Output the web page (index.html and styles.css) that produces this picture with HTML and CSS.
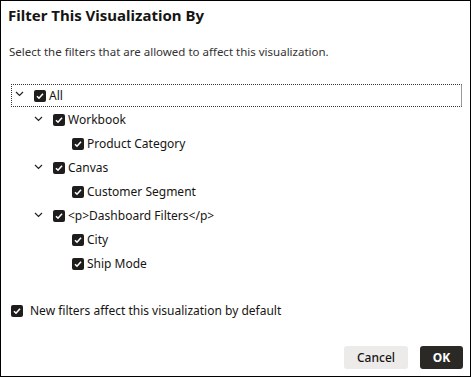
FILE: index.html
```html
<!DOCTYPE html>
<html>
<head>
<meta charset="utf-8">
<link rel="stylesheet" href="styles.css">
</head>
<body>
<div class="dialog">
  <h1 class="title">Filter This Visualization By</h1>
  <p class="desc">Select the filters that are allowed to affect this visualization.</p>
  <div class="tree">
    <div class="row lvl0 focused">
      <span class="chev"><svg width="9" height="6" viewBox="0 0 9 6"><path d="M1 1 L4.5 4.5 L8 1" fill="none" stroke="#222" stroke-width="1.2"/></svg></span>
      <span class="cb"><svg width="12" height="12" viewBox="0 0 12 12"><rect width="12" height="12" rx="2" fill="#1e1d1c"/><path d="M3 6.2 L5 8.2 L9 3.8" fill="none" stroke="#fff" stroke-width="1.6"/></svg></span>
      <span class="lbl">All</span>
    </div>
    <div class="row lvl1">
      <span class="chev"><svg width="9" height="6" viewBox="0 0 9 6"><path d="M1 1 L4.5 4.5 L8 1" fill="none" stroke="#222" stroke-width="1.2"/></svg></span>
      <span class="cb"><svg width="12" height="12" viewBox="0 0 12 12"><rect width="12" height="12" rx="2" fill="#1e1d1c"/><path d="M3 6.2 L5 8.2 L9 3.8" fill="none" stroke="#fff" stroke-width="1.6"/></svg></span>
      <span class="lbl">Workbook</span>
    </div>
    <div class="row lvl2">
      <span class="cb"><svg width="12" height="12" viewBox="0 0 12 12"><rect width="12" height="12" rx="2" fill="#1e1d1c"/><path d="M3 6.2 L5 8.2 L9 3.8" fill="none" stroke="#fff" stroke-width="1.6"/></svg></span>
      <span class="lbl">Product Category</span>
    </div>
    <div class="row lvl1">
      <span class="chev"><svg width="9" height="6" viewBox="0 0 9 6"><path d="M1 1 L4.5 4.5 L8 1" fill="none" stroke="#222" stroke-width="1.2"/></svg></span>
      <span class="cb"><svg width="12" height="12" viewBox="0 0 12 12"><rect width="12" height="12" rx="2" fill="#1e1d1c"/><path d="M3 6.2 L5 8.2 L9 3.8" fill="none" stroke="#fff" stroke-width="1.6"/></svg></span>
      <span class="lbl">Canvas</span>
    </div>
    <div class="row lvl2">
      <span class="cb"><svg width="12" height="12" viewBox="0 0 12 12"><rect width="12" height="12" rx="2" fill="#1e1d1c"/><path d="M3 6.2 L5 8.2 L9 3.8" fill="none" stroke="#fff" stroke-width="1.6"/></svg></span>
      <span class="lbl">Customer Segment</span>
    </div>
    <div class="row lvl1">
      <span class="chev"><svg width="9" height="6" viewBox="0 0 9 6"><path d="M1 1 L4.5 4.5 L8 1" fill="none" stroke="#222" stroke-width="1.2"/></svg></span>
      <span class="cb"><svg width="12" height="12" viewBox="0 0 12 12"><rect width="12" height="12" rx="2" fill="#1e1d1c"/><path d="M3 6.2 L5 8.2 L9 3.8" fill="none" stroke="#fff" stroke-width="1.6"/></svg></span>
      <span class="lbl">&lt;p&gt;Dashboard Filters&lt;/p&gt;</span>
    </div>
    <div class="row lvl2">
      <span class="cb"><svg width="12" height="12" viewBox="0 0 12 12"><rect width="12" height="12" rx="2" fill="#1e1d1c"/><path d="M3 6.2 L5 8.2 L9 3.8" fill="none" stroke="#fff" stroke-width="1.6"/></svg></span>
      <span class="lbl">City</span>
    </div>
    <div class="row lvl2">
      <span class="cb"><svg width="12" height="12" viewBox="0 0 12 12"><rect width="12" height="12" rx="2" fill="#1e1d1c"/><path d="M3 6.2 L5 8.2 L9 3.8" fill="none" stroke="#fff" stroke-width="1.6"/></svg></span>
      <span class="lbl">Ship Mode</span>
    </div>
  </div>
  <div class="option">
    <span class="cb"><svg width="12" height="12" viewBox="0 0 12 12"><rect width="12" height="12" rx="2" fill="#1e1d1c"/><path d="M3 6.2 L5 8.2 L9 3.8" fill="none" stroke="#fff" stroke-width="1.6"/></svg></span>
    <span class="lbl">New filters affect this visualization by default</span>
  </div>
  <div class="footer">
    <button class="btn cancel">Cancel</button>
    <button class="btn ok">OK</button>
  </div>
</div>
</body>
</html>
```
FILE: styles.css
```css
html, body {
  margin: 0;
  padding: 0;
  background: #fff;
}
.dialog {
  box-sizing: border-box;
  width: 471px;
  height: 377px;
  border: 1px solid #000;
  font-family: "Noto Sans", "Open Sans", sans-serif;
  color: #161513;
  display: flex;
  flex-direction: column;
  padding: 0 7px 0 7px;
}
.title {
  margin: 4px 0 0 0;
  font-size: 15px;
  font-weight: 700;
  line-height: 20px;
  color: #161513;
}
.desc {
  margin: 19px 0 0 1px;
  font-size: 11.5px;
  line-height: 16px;
  color: #333;
}
.tree {
  margin-top: 24px;
  margin-left: 3px;
  margin-right: 1px;
  display: flex;
  flex-direction: column;
}
.row {
  height: 24px;
  display: flex;
  align-items: center;
  font-size: 12px;
  box-sizing: border-box;
}
.row.focused {
  height: 23px;
  border-top: 1px dotted #333;
  border-bottom: 1px dotted #333;
  border-left: 1px dotted #333;
  border-right: 1px solid #999;
  margin-bottom: 1px;
}
.lvl0 { padding-left: 3px; }
.lvl1 { padding-left: 23px; }
.lvl2 { padding-left: 61px; }
.chev {
  width: 9px;
  height: 6px;
  display: flex;
  margin-right: 10px;
  margin-top: -3px;
}
.chev svg { display: block; }
.cb {
  width: 12px;
  height: 12px;
  display: flex;
  margin-right: 3px;
}
.cb svg { display: block; }
.lbl {
  line-height: 16px;
}
.option {
  margin-top: 27px;
  margin-left: 3px;
  display: flex;
  align-items: center;
  font-size: 12px;
  height: 16px;
}
.option .cb { margin-right: 7px; }
.footer {
  margin-top: auto;
  margin-bottom: 7px;
  display: flex;
  justify-content: flex-end;
  gap: 12px;
}
.btn {
  border: none;
  border-radius: 3px;
  height: 23px;
  font-family: "Noto Sans", "Open Sans", sans-serif;
  font-size: 12px;
  padding: 0;
  cursor: pointer;
}
.cancel {
  width: 64px;
  background: #ecebea;
  color: #161513;
  font-weight: 500;
}
.ok {
  width: 43px;
  background: #2b2926;
  color: #fff;
  font-weight: 700;
}
```
